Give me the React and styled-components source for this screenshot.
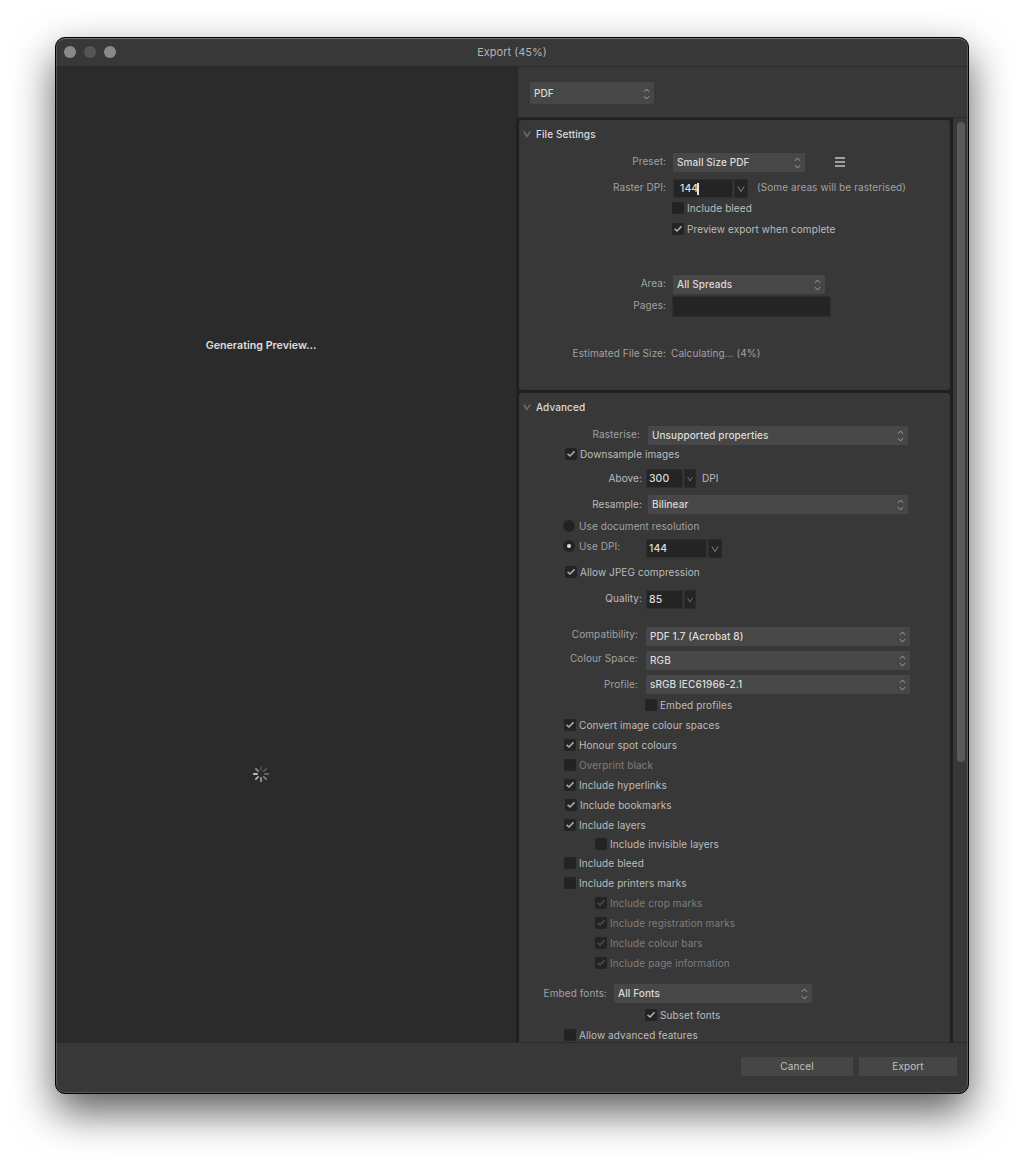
import { useState } from "react";
import styled, { createGlobalStyle, css } from "styled-components";

const GlobalStyle = createGlobalStyle`
    * {
        box-sizing: border-box;
    }

    body {
        margin: 0;
        background: #fff;
        font-family: Inter, "Liberation Sans", sans-serif;
        font-size: 10px;
        line-height: 12px;
        letter-spacing: 0.09px;
        color: #bcbcbc;
        overflow: hidden;
        -webkit-font-smoothing: antialiased;
    }
`;

const Page = styled.div`
    height: 1167px;
    padding: 37px 55px;
`;

const Window = styled.div`
    position: relative;
    display: flex;
    flex-direction: column;
    width: 914px;
    height: 1057px;
    border: 1px solid #000;
    border-radius: 10px;
    background: #383838;
    overflow: hidden;
    box-shadow: 0 18px 42px rgba(0, 0, 0, 0.64);

    &::after {
        content: "";
        position: absolute;
        inset: 0;
        border: 1px solid rgba(255, 255, 255, 0.16);
        border-top-color: rgba(255, 255, 255, 0.3);
        border-radius: 9px;
        pointer-events: none;
    }
`;

const TitleBar = styled.div`
    display: grid;
    grid-template-columns: 100px 1fr 100px;
    align-items: center;
    flex: none;
    height: 29px;
    border-bottom: 1px solid #2b2b2b;
`;

const Lights = styled.div`
    display: flex;
    gap: 8px;
    padding-left: 8px;
`;

const Light = styled.span`
    width: 12px;
    height: 12px;
    border-radius: 50%;
    background: ${props => (props.$dim ? "#555" : "#8a8a8a")};
`;

const Title = styled.div`
    text-align: center;
    font-size: 11px;
    letter-spacing: 0;
    color: #b4b4b4;
`;

const Body = styled.div`
    display: flex;
    flex: none;
    height: 975px;
`;

const Preview = styled.div`
    display: flex;
    flex-direction: column;
    align-items: center;
    width: 460px;
    padding: 272px 50px 0 0;
    background: #2b2b2b;
`;

const PreviewText = styled.div`
    font-size: 10.7px;
    font-weight: 600;
    line-height: 14px;
    letter-spacing: 0;
    color: #dedede;
`;

const Spinner = styled.svg`
    margin-top: 412px;
    width: 18px;
    height: 18px;
`;

const Settings = styled.div`
    display: flex;
    flex-direction: column;
    flex: 1;
`;

const FormatBar = styled.div`
    flex: none;
    height: 51px;
    padding: 15px 0 0 12px;
    border-left: 2px solid #2b2b2b;
    border-bottom: 1px solid #2b2b2b;
`;

const ScrollArea = styled.div`
    display: flex;
    flex: 1;
    min-height: 0;
    overflow: hidden;
`;

const Sections = styled.div`
    display: flex;
    flex-direction: column;
    gap: 3px;
    width: 437px;
    padding: 2px 3px 0;
    background: #202020;
`;

const Section = styled.section`
    flex: none;
    height: ${props => props.$height}px;
    border-radius: ${props => (props.$open ? "3px 3px 0 0" : "3px")};
    background: #383838;
`;

const SectionHeader = styled.div`
    display: flex;
    align-items: center;
    gap: 5px;
    height: 28px;
    padding-left: 4px;
    font-weight: 500;
    color: #dcdcdc;
`;

const ScrollTrack = styled.div`
    flex: 1;
    padding: 4px 0 0 4px;
`;

const ScrollThumb = styled.div`
    width: 8px;
    height: 640px;
    border-radius: 4px;
    background: #5a5a5a;
`;

const Row = styled.div`
    display: flex;
    align-items: center;
    height: ${props => props.$height || 19}px;
    margin-top: ${props => props.$gap || 0}px;
    padding-left: ${props => props.$indent || 0}px;
    white-space: nowrap;
`;

const Label = styled.div`
    width: ${props => props.$width}px;
    margin-right: ${props => props.$space ?? 7}px;
    padding-bottom: ${props => props.$lift ?? 2}px;
    text-align: right;
    color: ${props => (props.$bright ? "#bcbcbc" : "#a2a2a2")};
`;

const Note = styled.span`
    margin-left: ${props => props.$space || 0}px;
    padding-bottom: ${props => props.$lift ?? 2}px;
    color: ${props => (props.$bright ? "#bcbcbc" : "#a2a2a2")};
`;

const SelectBox = styled.div`
    display: flex;
    align-items: center;
    justify-content: space-between;
    width: ${props => props.$width}px;
    height: ${props => props.$height || 19}px;
    padding: ${props => (props.$height ? 1 : 0)}px 4px 0;
    border-radius: 1px;
    background: #474747;
    font-weight: 500;
    color: #dcdcdc;
`;

const SelectText = styled.span`
    padding-bottom: 2px;
`;

const Field = styled.div`
    display: flex;
    align-items: center;
    width: ${props => props.$width}px;
    height: ${props => props.$height || 19}px;
    padding-left: ${props => props.$pad ?? 3}px;
    border: 1px solid #2f2f2f;
    background: #242424;
    font-size: 10.4px;
    font-weight: 500;
    color: #dcdcdc;
`;

const Caret = styled.span`
    width: 2px;
    height: 12px;
    margin-left: -1px;
    background: #e4e4e4;
`;

const DropButton = styled.div`
    display: flex;
    align-items: center;
    justify-content: center;
    width: ${props => props.$width || 14}px;
    height: ${props => props.$height || 19}px;
    margin-left: 1px;
    border: 1px solid #2b2b2b;
    background: #242424;
`;

const Check = styled.label`
    display: flex;
    align-items: center;
    gap: 3.5px;
    margin-left: -0.5px;
    color: ${props => (props.$disabled ? "#7e7e7e" : "#bcbcbc")};

    ${props =>
        !props.$disabled &&
        css`
            cursor: pointer;
        `}
`;

const CheckMark = styled.span`
    display: flex;
    align-items: center;
    justify-content: center;
    width: 12px;
    height: 12px;
    border-radius: 2px;
    background: #232323;
    color: ${props => (props.$disabled ? "#4a4a4a" : "#acacac")};
`;

const Radio = styled.label`
    display: flex;
    align-items: center;
    gap: 4px;
    width: ${props => props.$width || "auto"};
    padding-bottom: ${props => props.$lift || 0}px;
    color: #a2a2a2;
`;

const RadioDot = styled.span`
    display: flex;
    align-items: center;
    justify-content: center;
    width: 12px;
    height: 12px;
    border-radius: 50%;
    background: #232323;

    &::after {
        content: "";
        width: 4px;
        height: 4px;
        border-radius: 50%;
        background: ${props => (props.$on ? "#dcdcdc" : "transparent")};
    }
`;

const MenuIcon = styled.div`
    display: flex;
    flex-direction: column;
    gap: 2px;
    width: 10px;
    margin: 0 0 1px 30px;

    span {
        height: 2px;
        background: #a0a0a0;
    }
`;

const Footer = styled.div`
    display: flex;
    justify-content: flex-end;
    gap: 6px;
    flex: 1;
    padding: 14px 11px 0 0;
    border-top: 1px solid #2b2b2b;
`;

const Button = styled.button`
    width: ${props => props.$width}px;
    height: 19px;
    padding: 0 0 2px;
    border: 0;
    border-radius: 1px;
    background: #464646;
    font: inherit;
    letter-spacing: inherit;
    color: #c0c0c0;
`;

function Chevron({ size = 8, color = "#8a8a8a", weight = 1 }) {
    return (
        <svg width={size} height={size} viewBox="0 0 8 8" fill="none" stroke={color} strokeWidth={weight}>
            <path d="M0.8 1.5 4 6.5 7.2 1.5" />
        </svg>
    );
}

function Select({ width, height, children }) {
    return (
        <SelectBox $width={width} $height={height}>
            <SelectText>{children}</SelectText>
            <svg width="7" height="12" viewBox="0 0 7 12" fill="none" stroke="#a0a0a0">
                <path d="M1 3.8 3.5 1 6 3.8M1 8.2 3.5 11 6 8.2" />
            </svg>
        </SelectBox>
    );
}

function Checkbox({ defaultOn, disabled, children }) {
    const [on, setOn] = useState(!!defaultOn);

    return (
        <Check $disabled={disabled} onClick={() => !disabled && setOn(!on)}>
            <CheckMark $disabled={disabled}>
                {on && (
                    <svg width="8" height="8" viewBox="0 0 8 8" fill="none" stroke="currentColor" strokeWidth="1.6">
                        <path d="M0.6 3.9 3 6 7.5 1.3" />
                    </svg>
                )}
            </CheckMark>
            {children}
        </Check>
    );
}

const spokes = ["#4a4a4a", "#555", "#666", "#808080", "#989898", "#b0b0b0", "#bcbcbc", "#8c8c8c"];

const options = [
    { text: "Convert image colour spaces", on: true, gap: 8 },
    { text: "Honour spot colours", on: true },
    { text: "Overprint black", disabled: true },
    { text: "Include hyperlinks", on: true },
    { text: "Include bookmarks", on: true, indent: 46 },
    { text: "Include layers", on: true },
    { text: "Include invisible layers", indent: 76, gap: 7 },
    { text: "Include bleed", gap: 7 },
    { text: "Include printers marks" },
    { text: "Include crop marks", on: true, disabled: true, indent: 76 },
    { text: "Include registration marks", on: true, disabled: true, indent: 76 },
    { text: "Include colour bars", on: true, disabled: true, indent: 76 },
    { text: "Include page information", on: true, disabled: true, indent: 76 },
];

function FileSettings() {
    return (
        <Section $height={270}>
            <SectionHeader>
                <Chevron color="#6c6c6c" weight={1.4} />
                File Settings
            </SectionHeader>
            <Row $gap={5}>
                <Label $width={147} $lift={4}>Preset:</Label>
                <Select width={132}>Small Size PDF</Select>
                <MenuIcon>
                    <span />
                    <span />
                    <span />
                </MenuIcon>
            </Row>
            <Row $gap={7}>
                <Label $width={147} $lift={4}>Raster DPI:</Label>
                <Field $width={60} $pad={6}>
                    144
                    <Caret />
                </Field>
                <DropButton>
                    <Chevron />
                </DropButton>
                <Note $space={9} $lift={4}>(Some areas will be rasterised)</Note>
            </Row>
            <Row $height={12} $gap={4} $indent={153}>
                <Checkbox>Include bleed</Checkbox>
            </Row>
            <Row $height={12} $gap={9} $indent={153}>
                <Checkbox defaultOn>Preview export when complete</Checkbox>
            </Row>
            <Row $gap={40}>
                <Label $width={147} $lift={4}>Area:</Label>
                <Select width={152}>All Spreads</Select>
            </Row>
            <Row $height={21} $gap={2}>
                <Label $width={147} $space={6} $lift={4}>Pages:</Label>
                <Field $width={159} $height={21} />
            </Row>
            <Row $height={13} $gap={30}>
                <Label $width={147} $space={5}>Estimated File Size:</Label>
                <Note>Calculating... (4%)</Note>
            </Row>
        </Section>
    );
}

function Advanced() {
    return (
        <Section $height={700} $open>
            <SectionHeader>
                <Chevron color="#6c6c6c" weight={1.4} />
                Advanced
            </SectionHeader>
            <Row $gap={5}>
                <Label $width={121} $space={8} $lift={3}>Rasterise:</Label>
                <Select width={260}>Unsupported properties</Select>
            </Row>
            <Row $height={12} $gap={3} $indent={46}>
                <Checkbox defaultOn>Downsample images</Checkbox>
            </Row>
            <Row $gap={9}>
                <Label $width={123} $space={4} $bright>Above:</Label>
                <Field $width={37} $pad={2}>300</Field>
                <DropButton $width={12}>
                    <Chevron size={6} />
                </DropButton>
                <Note $space={6} $bright>DPI</Note>
            </Row>
            <Row $gap={7}>
                <Label $width={123} $space={6} $bright>Resample:</Label>
                <Select width={260}>Bilinear</Select>
            </Row>
            <Row $height={12} $gap={6} $indent={44}>
                <Radio>
                    <RadioDot />
                    Use document resolution
                </Radio>
            </Row>
            <Row $gap={7} $indent={44}>
                <Radio $width="83px" $lift={5}>
                    <RadioDot $on />
                    Use DPI:
                </Radio>
                <Field $width={61} $pad={2}>144</Field>
                <DropButton>
                    <Chevron />
                </DropButton>
            </Row>
            <Row $height={12} $gap={8} $indent={46}>
                <Checkbox defaultOn>Allow JPEG compression</Checkbox>
            </Row>
            <Row $gap={12}>
                <Label $width={123} $space={4} $lift={4} $bright>Quality:</Label>
                <Field $width={37} $pad={2}>85</Field>
                <DropButton $width={12}>
                    <Chevron size={6} />
                </DropButton>
            </Row>
            <Row $gap={18}>
                <Label $width={119} $space={8} $lift={6}>Compatibility:</Label>
                <Select width={264}>PDF 1.7 (Acrobat 8)</Select>
            </Row>
            <Row $gap={5}>
                <Label $width={119} $space={8} $lift={6}>Colour Space:</Label>
                <Select width={264}>RGB</Select>
            </Row>
            <Row $gap={5}>
                <Label $width={119} $space={8}>Profile:</Label>
                <Select width={264}>sRGB IEC61966-2.1</Select>
            </Row>
            <Row $height={12} $gap={5} $indent={126}>
                <Checkbox>Embed profiles</Checkbox>
            </Row>
            {options.map(item => (
                <Row key={item.text} $height={12} $gap={item.gap || 8} $indent={item.indent || 45}>
                    <Checkbox defaultOn={item.on} disabled={item.disabled}>
                        {item.text}
                    </Checkbox>
                </Row>
            ))}
            <Row $gap={15}>
                <Label $width={88}>Embed fonts:</Label>
                <Select width={198}>All Fonts</Select>
            </Row>
            <Row $height={12} $gap={6} $indent={126}>
                <Checkbox defaultOn>Subset fonts</Checkbox>
            </Row>
            <Row $height={12} $gap={8} $indent={45}>
                <Checkbox>Allow advanced features</Checkbox>
            </Row>
        </Section>
    );
}

export default function App() {
    return (
        <Page>
            <GlobalStyle />
            <Window>
                <TitleBar>
                    <Lights>
                        <Light />
                        <Light $dim />
                        <Light />
                    </Lights>
                    <Title>Export (45%)</Title>
                </TitleBar>
                <Body>
                    <Preview>
                        <PreviewText>Generating Preview...</PreviewText>
                        <Spinner viewBox="-9 -9 18 18" strokeWidth="1.8" strokeLinecap="round">
                            {spokes.map((color, i) => (
                                <path key={color} d="M0 -4V-7.2" stroke={color} transform={`rotate(${i * 45})`} />
                            ))}
                        </Spinner>
                    </Preview>
                    <Settings>
                        <FormatBar>
                            <Select width={124} height={22}>PDF</Select>
                        </FormatBar>
                        <ScrollArea>
                            <Sections>
                                <FileSettings />
                                <Advanced />
                            </Sections>
                            <ScrollTrack>
                                <ScrollThumb />
                            </ScrollTrack>
                        </ScrollArea>
                    </Settings>
                </Body>
                <Footer>
                    <Button $width={112}>Cancel</Button>
                    <Button $width={98}>Export</Button>
                </Footer>
            </Window>
        </Page>
    );
}
